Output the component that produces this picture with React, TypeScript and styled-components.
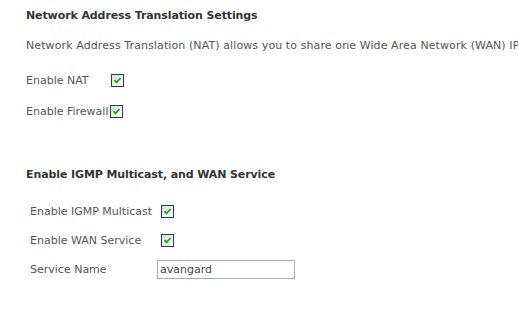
import * as React from 'react';
import styled, { createGlobalStyle } from 'styled-components';

const GlobalStyle = createGlobalStyle`
  html, body {
    margin: 0;
    padding: 0;
    background: #ffffff;
    overflow: hidden;
  }
  body {
    font-family: "DejaVu Sans", Tahoma, Verdana, sans-serif;
    font-size: 11px;
    color: #555555;
  }
`;

const Page = styled.div`
  width: 518px;
  height: 331px;
  padding-left: 26px;
  box-sizing: border-box;
  overflow: hidden;
`;

const Heading = styled.div<{ $top: number }>`
  margin-top: ${(p) => p.$top}px;
  line-height: 14px;
  font-weight: bold;
  letter-spacing: -0.1px;
  color: #333333;
  white-space: nowrap;
`;

const Description = styled.div`
  margin-top: 16px;
  line-height: 14px;
  letter-spacing: 0.1px;
  white-space: nowrap;
`;

const Table = styled.div<{ $top: number; $indent: number; $row: number; $col: number }>`
  display: grid;
  grid-template-columns: ${(p) => p.$col}px auto;
  grid-auto-rows: ${(p) => p.$row}px;
  align-items: center;
  margin-top: ${(p) => p.$top}px;
  padding-left: ${(p) => p.$indent}px;
`;

const Label = styled.div`
  line-height: 14px;
  white-space: nowrap;
`;

const Cell = styled.div<{ $shift?: number }>`
  display: flex;
  align-items: center;
  padding-left: ${(p) => p.$shift ?? 0}px;
`;

const Box = styled.span`
  display: inline-flex;
  align-items: center;
  justify-content: center;
  width: 13px;
  height: 13px;
  box-sizing: border-box;
  border: 1px solid #1f3d66;
  background: linear-gradient(135deg, #dcdcd6 0%, #f4f4f0 60%, #ffffff 100%);
`;

const TextField = styled.input.attrs({ type: 'text' })`
  width: 138px;
  height: 19px;
  box-sizing: border-box;
  border: 1px solid #a5acb2;
  padding: 0 2px;
  margin: 0;
  font-family: "DejaVu Sans", Tahoma, Verdana, sans-serif;
  font-size: 11px;
  color: #444444;
  background: #ffffff;
  outline: none;
`;

const CheckBox: React.FC = () => (
  <Box>
    <svg width="9" height="9" viewBox="0 0 9 9">
      <path d="M1.5 4.2 L3.5 6.4 L7.6 2" fill="none" stroke="#21a121" strokeWidth="1.8" />
    </svg>
  </Box>
);

export default function App() {
  return (
    <Page>
      <GlobalStyle />
      <Heading $top={9}>Network Address Translation Settings</Heading>
      <Description>
        Network Address Translation (NAT) allows you to share one Wide Area Network (WAN) IP
      </Description>
      <Table $top={12} $indent={0} $row={31} $col={84}>
        <Label>Enable NAT</Label>
        <Cell $shift={1}><CheckBox /></Cell>
        <Label>Enable Firewall</Label>
        <Cell><CheckBox /></Cell>
      </Table>
      <Heading $top={41}>Enable IGMP Multicast, and WAN Service</Heading>
      <Table $top={15} $indent={4} $row={29} $col={127}>
        <Label>Enable IGMP Multicast</Label>
        <Cell $shift={4}><CheckBox /></Cell>
        <Label>Enable WAN Service</Label>
        <Cell $shift={4}><CheckBox /></Cell>
        <Label>Service Name</Label>
        <Cell><TextField defaultValue="avangard" /></Cell>
      </Table>
    </Page>
  );
}
